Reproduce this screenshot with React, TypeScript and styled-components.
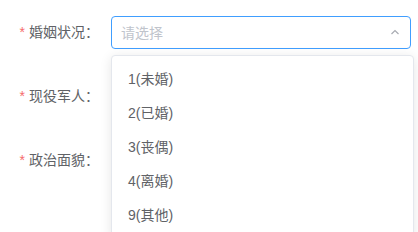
import React from "react";
import styled, { createGlobalStyle } from "styled-components";

const GlobalStyle = createGlobalStyle`
  html, body {
    margin: 0;
    min-height: 232px;
    background: #fff;
    font-family: "Helvetica Neue", "Liberation Sans", "Noto Sans CJK SC", sans-serif;
    font-size: 14px;
  }
`;

const Page = styled.div`
  height: 232px;
  overflow: hidden;
`;

const Form = styled.div`
  padding: 16px 7px 0 0;
`;

const FormItem = styled.div<{ $open?: boolean }>`
  position: relative;
  z-index: ${(p) => (p.$open ? 5 : 1)};
  display: flex;
  align-items: center;
  height: 32px;
  margin-bottom: 32px;
`;

const Label = styled.label`
  width: 111px;
  flex: none;
  padding-right: 12px;
  box-sizing: border-box;
  text-align: right;
  color: #606266;
  line-height: 32px;
`;

const Star = styled.span`
  color: #f56c6c;
  margin-right: 4px;
`;

const Select = styled.div<{ $focused?: boolean }>`
  position: relative;
  flex: 1;
  height: 33px;
  box-sizing: border-box;
  border: 1px solid ${(p) => (p.$focused ? "#409eff" : "#dcdfe6")};
  border-radius: 4px;
  display: flex;
  align-items: center;
  padding: 0 9px;
  color: #c0c4cc;
`;

const Placeholder = styled.span`
  flex: 1;
`;

const Arrow = styled.svg`
  width: 12px;
  height: 12px;
`;

const Dropdown = styled.ul`
  position: absolute;
  top: 38px;
  left: -1px;
  width: 301px;
  margin: 0;
  padding: 6px 0;
  list-style: none;
  background: #fff;
  border: 1px solid #e4e7ed;
  border-radius: 4px;
  box-shadow: 0 2px 12px 0 rgba(0, 0, 0, 0.1);
`;

const Option = styled.li`
  height: 34px;
  line-height: 34px;
  padding: 0 16px;
  color: #606266;
  font-size: 14px;
`;

const options = ["1(未婚)", "2(已婚)", "3(丧偶)", "4(离婚)", "9(其他)"];

const fields = [
  { label: "婚姻状况：", open: true },
  { label: "现役军人：", open: false },
  { label: "政治面貌：", open: false },
];

export default function App() {
  return (
    <Page>
      <GlobalStyle />
      <Form>
        {fields.map((f) => (
          <FormItem key={f.label} $open={f.open}>
            <Label>
              <Star>*</Star>
              {f.label}
            </Label>
            <Select $focused={f.open}>
              <Placeholder>请选择</Placeholder>
              <Arrow viewBox="0 0 12 12" fill="none">
                <path
                  d={f.open ? "M2.5 8 L6 4.5 L9.5 8" : "M2.5 4.5 L6 8 L9.5 4.5"}
                  stroke="#a8abb2"
                  strokeWidth="1.2"
                />
              </Arrow>
              {f.open && (
                <Dropdown>
                  {options.map((o) => (
                    <Option key={o}>{o}</Option>
                  ))}
                </Dropdown>
              )}
            </Select>
          </FormItem>
        ))}
      </Form>
    </Page>
  );
}
